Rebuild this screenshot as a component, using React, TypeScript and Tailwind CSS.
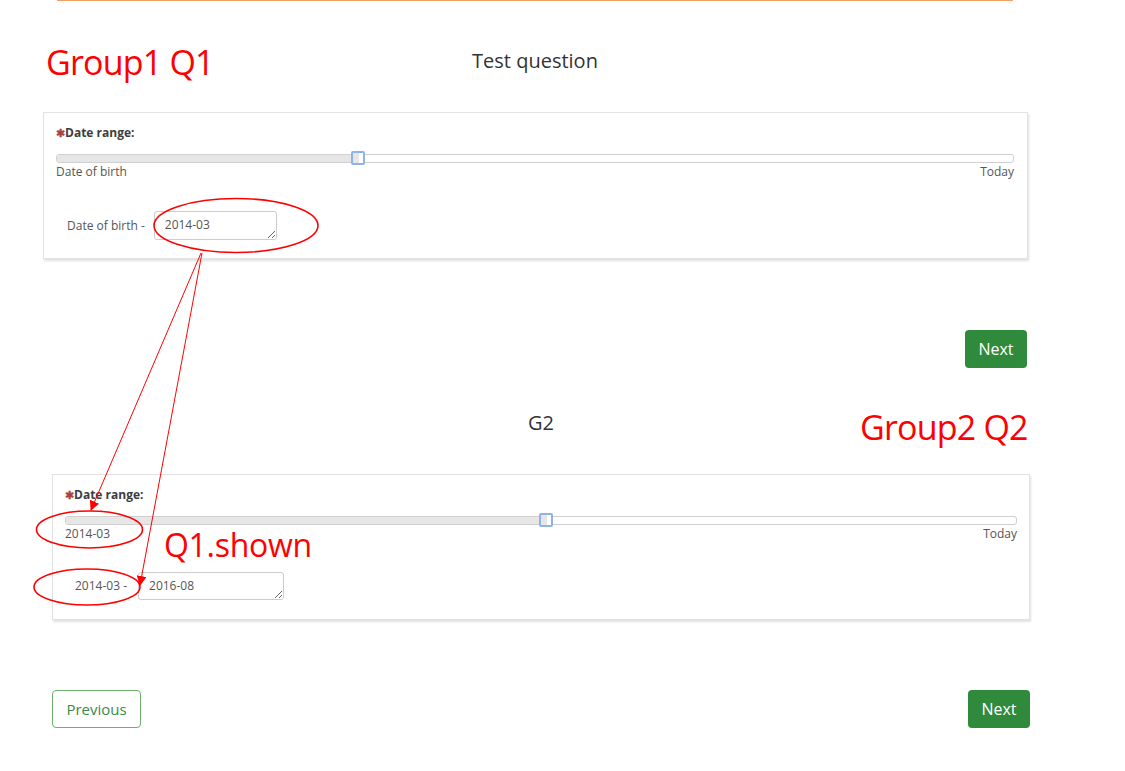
import React from "react";

function Slider({ pct, fillTo }: { pct: number; fillTo: number }) {
  return (
    <div className="relative h-[14px]">
      <div className="absolute left-0 right-0 top-[3px] h-[9px] rounded-[3px] border border-[#cfcfcf] bg-white overflow-hidden">
        <div className="h-full bg-[#e6e6e6]" style={{ width: `${fillTo}%` }} />
      </div>
      <div
        className="absolute top-0 h-[14px] w-[14px] rounded-[2px] border-2 border-[#8fb2ea] bg-white overflow-hidden"
        style={{ left: `calc(${pct}% - 7px)` }}
      >
        <div className="h-full w-[6px] bg-[#e6e6e6]" />
      </div>
    </div>
  );
}

function Panel({
  cls,
  left,
  right,
  pct,
  rowLabel,
  value,
  labelPad,
  gap,
  taW,
  taH,
  rowMt,
}: {
  cls: string;
  left: string;
  right: string;
  pct: number;
  rowLabel: string;
  value: string;
  labelPad: string;
  gap: string;
  taW: string;
  taH: string;
  rowMt: string;
}) {
  return (
    <div className={`border border-[#e2e2e2] bg-white shadow-[1px_2px_2px_rgba(0,0,0,0.12)] ${cls}`}>
      <div className="text-[12px] leading-[16px] font-bold text-[#3d3d3d]">
        <span className="text-[#a94442] text-[11px]">✱</span>Date range:
      </div>
      <div className="mt-[10px]">
        <Slider pct={pct} fillTo={pct} />
      </div>
      <div className="flex justify-between text-[12px] leading-[14px] text-[#555]">
        <span>{left}</span>
        <span>{right}</span>
      </div>
      <div className={`flex items-center ${rowMt}`}>
        <span className={`text-[12px] text-[#555] ${labelPad} ${gap}`}>{rowLabel}</span>
        <textarea
          readOnly
          defaultValue={value}
          className={`${taW} ${taH} resize block rounded-[3px] border border-[#cccccc] pl-[10px] pt-[5px] text-[12px] leading-[16px] text-[#555] outline-none`}
        />
      </div>
    </div>
  );
}

export default function App() {
  return (
    <div
      className="relative w-[1125px] min-h-[771px] bg-white overflow-hidden"
      style={{ fontFamily: '"Open Sans", "Noto Sans", sans-serif' }}
    >
      <div className="ml-[57px] w-[956px] h-px bg-[#f4a062]" />

      <div className="mt-[47px] w-[1070px] text-center text-[20px] leading-[26px] text-[#333]">
        Test question
      </div>

      <div className="ml-[43px] w-[985px] mt-[38px]">
        <Panel
          cls="pt-[12px] pb-[18px] pl-[12px] pr-[13px]"
          left="Date of birth"
          right="Today"
          pct={31.55}
          rowLabel="Date of birth -"
          value="2014-03"
          labelPad="pl-[11px]"
          gap="mr-[9px]"
          taW="w-[123px]"
          taH="h-[29px]"
          rowMt="mt-[32px]"
        />
        <div className="flex justify-end mt-[71px] pr-[1px]">
          <button className="h-[38px] w-[62px] rounded-[4px] bg-[#2f8a3c] text-white text-[16px]">Next</button>
        </div>
      </div>

      <div className="mt-[42px] w-[1082px] text-center text-[20px] leading-[26px] text-[#333]">G2</div>

      <div className="ml-[52px] w-[978px] mt-[38px]">
        <Panel
          cls="pt-[12px] pb-[19px] pl-[12px] pr-[12px]"
          left="2014-03"
          right="Today"
          pct={50.5}
          rowLabel="2014-03 -"
          value="2016-08"
          labelPad="pl-[10px]"
          gap="mr-[11px]"
          taW="w-[146px]"
          taH="h-[28px]"
          rowMt="mt-[31px]"
        />
        <div className="flex justify-between mt-[70px]">
          <button className="h-[38px] w-[89px] rounded-[4px] border border-[#6cb06c] bg-white text-[#3b8a48] text-[15px]">
            Previous
          </button>
          <button className="h-[38px] w-[62px] rounded-[4px] bg-[#2f8a3c] text-white text-[16px]">Next</button>
        </div>
      </div>

      {/* annotations */}
      <svg className="absolute left-0 top-0 pointer-events-none" width="1125" height="771" viewBox="0 0 1125 771">
        <defs>
          <marker id="ah" markerWidth="10" markerHeight="10" refX="9" refY="5" orient="auto" markerUnits="userSpaceOnUse">
            <path d="M0,0 L10,5 L0,10 z" fill="#ff0000" />
          </marker>
        </defs>
        <ellipse cx="236" cy="225.5" rx="82" ry="27" fill="none" stroke="#ff0000" strokeWidth="1.6" />
        <ellipse cx="89.5" cy="529.5" rx="53" ry="18.5" fill="none" stroke="#ff0000" strokeWidth="1.6" />
        <ellipse cx="87" cy="587" rx="53" ry="18" fill="none" stroke="#ff0000" strokeWidth="1.6" />
        <line x1="201" y1="253" x2="91" y2="510" stroke="#ff0000" strokeWidth="1" markerEnd="url(#ah)" />
        <line x1="202" y1="253" x2="140" y2="585" stroke="#ff0000" strokeWidth="1" markerEnd="url(#ah)" />
      </svg>
      <div className="absolute left-[46px] top-[45px] text-[34px] leading-none tracking-[-0.8px] text-[#ff0000] whitespace-nowrap">
        Group1 Q1
      </div>
      <div className="absolute left-[860px] top-[410px] text-[34px] leading-none tracking-[-0.8px] text-[#ff0000] whitespace-nowrap">
        Group2 Q2
      </div>
      <div className="absolute left-[164px] top-[529px] text-[32px] leading-none tracking-[-0.3px] text-[#ff0000] whitespace-nowrap">
        Q1.shown
      </div>
    </div>
  );
}
